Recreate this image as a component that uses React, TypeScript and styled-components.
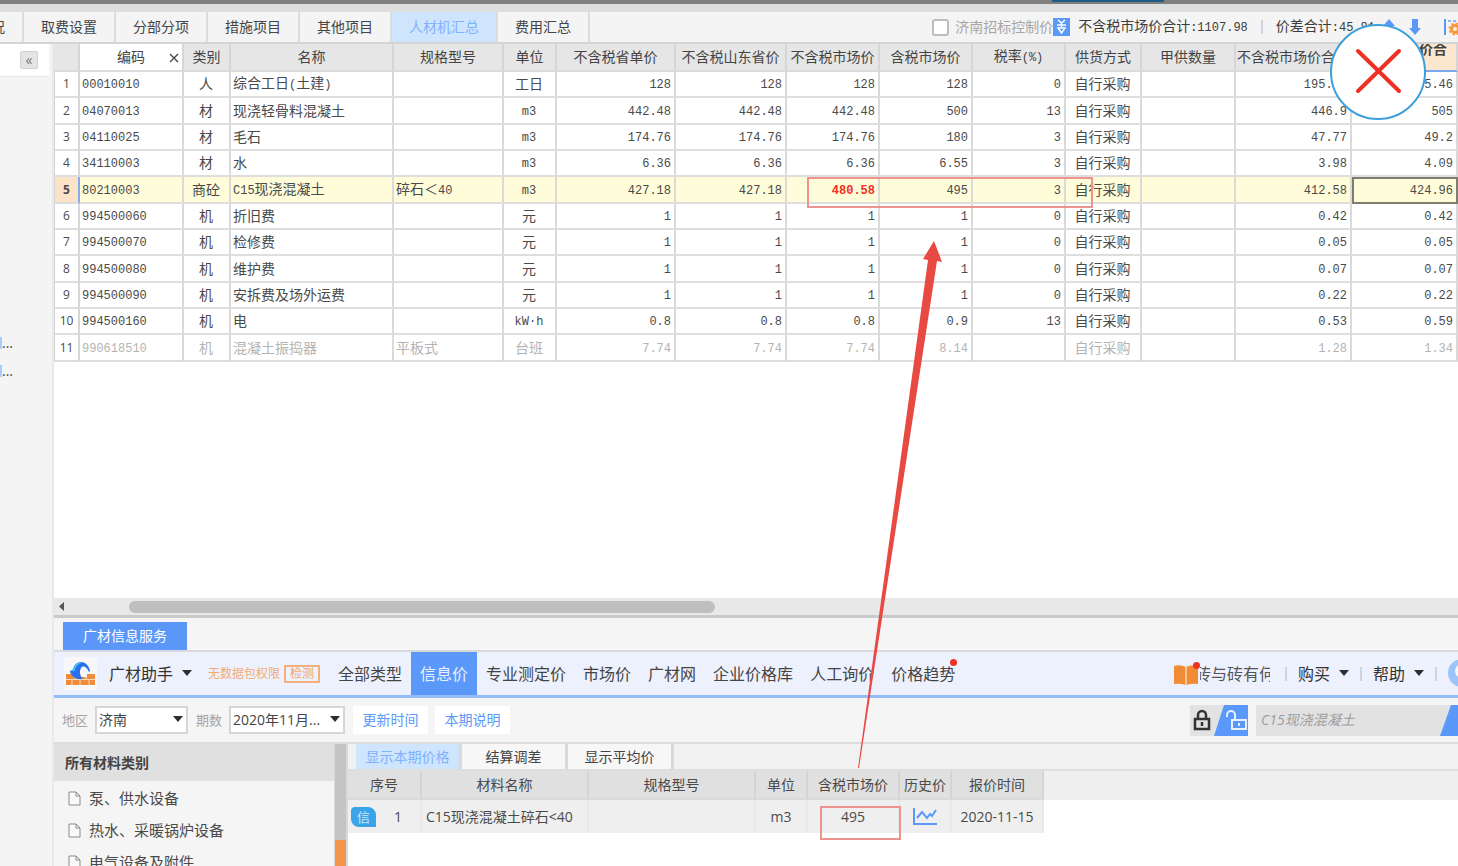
import React from 'react';
import styled, { createGlobalStyle, css } from 'styled-components';

const sans = '"Open Sans", "Noto Sans CJK SC", sans-serif';
const mono = '"Liberation Mono", "Noto Sans CJK SC", monospace';

const Global = createGlobalStyle`
  *, *::before, *::after { box-sizing: border-box; }
  body { margin: 0; background: #fff; color: #4a4a4a; font: 14px/20px ${sans}; overflow: hidden; }
  button, input, select { font: inherit; color: inherit; margin: 0; }
  button { border: 0; padding: 0; background: none; white-space: nowrap; cursor: pointer; }
`;

const Page = styled.div`
  position: relative;
  height: 100vh;
  min-width: 1200px;
  display: flex;
  flex-direction: column;
  overflow: hidden;
`;

const TitleStrip = styled.div`
  flex: none;
  height: 12px;
  background: #dedede;
  border-top: 4px solid #7f7f7f;
`;

const StripMark = styled.div`
  position: absolute;
  top: 0;
  left: 1052px;
  width: 112px;
  height: 2px;
  background: #1d5a85;
`;

const TopBar = styled.header`
  flex: none;
  display: flex;
  height: 32px;
  background: #f4f4f4;
  border-bottom: 2px solid #d4d4d4;
  overflow: hidden;
`;

const TopTab = styled.button<{ $active?: boolean; $wide?: boolean; $cut?: boolean }>`
  flex: none;
  width: ${p => (p.$wide ? 106 : p.$cut ? 24 : 92)}px;
  border-right: 2px solid #dcdcdc;
  background: ${p => (p.$active ? '#cfe5fe' : '#f4f4f4')};
  color: ${p => (p.$active ? '#7fb2fb' : '#444')};
  ${p => p.$cut && css`display: flex; justify-content: flex-end; align-items: center; padding-right: 17px; overflow: hidden;`}
`;

const Summary = styled.div`
  flex: 1;
  display: flex;
  align-items: center;
  justify-content: flex-end;
  white-space: nowrap;
  color: #3c3c3c;
`;

const CheckLabel = styled.label`
  display: flex;
  align-items: center;
  gap: 6px;
  color: #a6a6a6;
`;

const Checkbox = styled.input`
  appearance: none;
  width: 17px;
  height: 17px;
  border: 2px solid #bdbdbd;
  border-radius: 3px;
  background: #fff;
`;

const Total = styled.span`
  margin-left: 8px;
`;

const Num = styled.span`
  font: 12px/20px ${mono};
`;

const Sep = styled.i<{ $gap: number }>`
  width: 2px;
  height: 14px;
  margin: 0 ${p => p.$gap}px;
  background: #cdd3df;
`;

const Icon = styled.svg`
  flex: none;
  display: block;
`;

const ArrowButton = styled.button<{ $tight?: boolean }>`
  margin-left: ${p => (p.$tight ? 7 : 12)}px;
`;

const Body = styled.div`
  flex: 1;
  display: flex;
  min-height: 0;
`;

const Side = styled.aside`
  flex: none;
  width: 54px;
  background: #f4f4f4;
  border-right: 2px solid #e9e9e9;
`;

const SideHead = styled.div`
  height: 33px;
  margin-right: 3px;
  display: flex;
  align-items: center;
  justify-content: flex-end;
  padding-right: 11px;
  background: #fff;
  border-bottom: 1px solid #e6e6e6;
`;

const Collapse = styled.button`
  width: 18px;
  height: 18px;
  border: 1px solid #d0d0d0;
  border-radius: 2px;
  background: #e4e4e4;
  color: #777;
  font-size: 14px;
  line-height: 14px;
`;

const SideList = styled.div`
  display: flex;
  flex-direction: column;
  gap: 16px;
  padding-top: 260px;
`;

const SideItem = styled.div`
  height: 12px;
  border-left: 2px solid #a9cdf7;
  line-height: 12px;
`;

const Main = styled.main`
  flex: 1;
  min-width: 0;
  display: flex;
  flex-direction: column;
`;

const GridArea = styled.section`
  flex: none;
  height: 554px;
  overflow: hidden;
`;

const Grid = styled.table`
  width: 100%;
  table-layout: fixed;
  border-collapse: separate;
  border-spacing: 0;
  white-space: nowrap;
`;

const GridHead = styled.th<{ $kind?: 'white' | 'warm' }>`
  position: relative;
  height: 28px;
  padding: 0;
  overflow: hidden;
  font-weight: 400;
  color: #444;
  background: ${p => (p.$kind === 'white' ? '#fff' : p.$kind === 'warm' ? '#fce6cd' : '#e6e6e6')};
  border-right: 2px solid #d6d6d6;
  border-bottom: 2px solid ${p => (p.$kind === 'warm' ? '#7ba9ee' : '#dcdcdc')};
  ${p => p.$kind === 'warm' && css`
    vertical-align: top;
    text-align: right;
    padding-right: 9px;
    font-weight: 700;
    line-height: 10px;
  `}
`;

const ClearMark = styled.button`
  position: absolute;
  right: 2px;
  top: 8px;
`;

const Row = styled.tr<{ $state?: 'selected' | 'muted' }>`
  height: 26px;
  color: #4a4a4a;
  &:nth-child(3n + 2) { height: 27px; }
  ${p => p.$state === 'selected' && css`background: #fefcd9;`}
  ${p => p.$state === 'muted' && css`color: #b4b4b4;`}
`;

const Cell = styled.td<{ $align?: 'left' | 'right' | 'center'; $num?: boolean; $alert?: boolean; $focus?: boolean }>`
  padding: 0 3px 0 2px;
  line-height: 20px;
  text-align: ${p => p.$align || 'left'};
  border-right: 2px solid #dadada;
  border-bottom: 2px solid #dedede;
  ${p => p.$num && css`padding-top: 2px; font: 12px/20px ${mono};`}
  ${p => p.$alert && css`color: #f0301f; font-weight: 700;`}
  ${p => p.$focus && css`outline: 2px solid #7d7d70; outline-offset: -2px;`}
`;

const IndexCell = styled.th<{ $on?: boolean }>`
  padding: 0;
  font: ${p => (p.$on ? 700 : 400)} 12px/20px ${sans};
  color: #4a4a4a;
  background: ${p => (p.$on ? '#fce2c6' : '#fff')};
  border-left: 1px solid #d6d6d6;
  border-right: 2px solid ${p => (p.$on ? '#82aeee' : '#d6d6d6')};
  border-bottom: 2px solid #dedede;
`;

const ScrollBar = styled.div`
  flex: none;
  display: flex;
  align-items: center;
  height: 20px;
  padding-left: 5px;
  background: #e8e8e8;
  border-bottom: 3px solid #cacaca;
`;

const Thumb = styled.div`
  width: 586px;
  height: 12px;
  margin-left: 64px;
  border-radius: 6px;
  background: #bfbfbf;
`;

const Service = styled.section`
  flex: 1;
  min-height: 0;
  display: flex;
  flex-direction: column;
  background: #f5f5f5;
`;

const ServiceTabs = styled.div`
  flex: none;
  height: 34px;
  padding: 4px 0 0 9px;
  border-bottom: 2px solid #d9dae0;
`;

const ServiceTab = styled.button`
  width: 124px;
  height: 28px;
  background: #5b97f9;
  color: #fff;
`;

const Nav = styled.nav`
  flex: none;
  display: flex;
  align-items: center;
  height: 46px;
  padding-left: 10px;
  background: #edf1fe;
  border-bottom: 3px solid #92bdf8;
  font-size: 16px;
  white-space: nowrap;
`;

const Logo = styled.span`
  width: 33px;
  height: 33px;
  display: grid;
  place-items: center;
  border-radius: 4px;
  background: #f8f8fa;
`;

const MenuButton = styled.button`
  display: flex;
  align-items: center;
  gap: 9px;
  color: #333;
`;

const Brand = styled(MenuButton)`
  margin: 0 16px 0 12px;
`;

const Notice = styled.span`
  font-size: 12px;
  color: #f2ac74;
`;

const Detect = styled.button`
  width: 36px;
  height: 18px;
  margin: 0 10px 0 4px;
  border: 2px solid #f3b07a;
  color: #f2a468;
  font-size: 12px;
  line-height: 14px;
`;

const NavItem = styled.button<{ $active?: boolean }>`
  position: relative;
  height: 43px;
  padding: 0 8px;
  color: ${p => (p.$active ? '#e8f1ff' : '#444')};
  ${p => p.$active && css`background: #5a98fa; padding: 0 9px;`}
`;

const NavList = styled.div`
  display: flex;
  gap: 1px;
`;

const Dot = styled.i<{ $top: number; $right: number }>`
  position: absolute;
  top: ${p => p.$top}px;
  right: ${p => p.$right}px;
  width: 7px;
  height: 7px;
  border-radius: 50%;
  background: #ee3322;
`;

const NavRight = styled.div`
  flex: 1;
  display: flex;
  align-items: center;
  justify-content: flex-end;
`;

const Book = styled.span`
  position: relative;
  width: 26px;
  height: 24px;
`;

const Ticker = styled.a`
  display: flex;
  justify-content: center;
  width: 70px;
  margin-right: 4px;
  overflow: hidden;
  color: #555;
  text-decoration: none;
`;

const Filters = styled.div`
  flex: none;
  display: flex;
  align-items: center;
  height: 46px;
  padding-left: 8px;
  border-bottom: 2px solid #dcdcdc;
  white-space: nowrap;
`;

const FilterLabel = styled.label`
  font-size: 13px;
  color: #a3a3a3;
`;

const SelectBox = styled.span<{ $w: number }>`
  position: relative;
  width: ${p => p.$w}px;
  height: 28px;
  margin: 0 8px 0 7px;
  & > svg { position: absolute; right: 5px; top: 10px; pointer-events: none; }
`;

const Select = styled.select`
  appearance: none;
  width: 100%;
  height: 100%;
  padding: 0 2px;
  border: 2px solid #d6d6d6;
  border-radius: 0;
  background: #fff;
  color: #444;
`;

const LinkButton = styled.button`
  height: 28px;
  width: 75px;
  margin: 0 7px 0 0;
  background: #fff;
  color: #5a98fa;
`;

const LockGroup = styled.div`
  display: flex;
  width: 58px;
  height: 31px;
  margin: 0 8px 0 auto;
  background: #e2e2e2;
`;

const SearchBox = styled.div`
  display: flex;
  width: 202px;
  height: 31px;
  background: #e2e2e2;
`;

const SearchInput = styled.input`
  flex: 1;
  min-width: 0;
  border: 0;
  padding: 0 5px;
  background: transparent;
  font-style: italic;
  &::placeholder { color: #9d9d9d; opacity: 1; }
`;

const Lower = styled.div`
  flex: 1;
  min-height: 0;
  display: flex;
`;

const Categories = styled.div`
  flex: none;
  width: 280px;
  overflow: hidden;
`;

const CategoryHead = styled.h2`
  margin: 0;
  height: 37px;
  padding-left: 11px;
  font-size: 14px;
  line-height: 37px;
  background: #e0e0e0;
  color: #444;
`;

const CategoryList = styled.ul`
  list-style: none;
  margin: 0 10px 0 0;
  padding: 1px 0 0 14px;
`;

const Category = styled.li`
  display: flex;
  align-items: center;
  gap: 8px;
  height: 32px;
  font-size: 15px;
  color: #4a4a4a;
`;

const Splitter = styled.div`
  flex: none;
  width: 14px;
  border: solid #d9d9d9;
  border-width: 0 2px 0 1px;
  background: linear-gradient(#c5c4c2 96px, #f0954a 96px);
`;

const Prices = styled.div`
  flex: 1;
  min-width: 0;
  background: #fff;
`;

const PriceTabs = styled.div`
  display: flex;
  height: 27px;
  padding-left: 8px;
  background: #f1f1f1;
  border-bottom: 2px solid #dedede;
`;

const PriceTab = styled.button<{ $active?: boolean }>`
  width: 106px;
  border-right: 3px solid #d9d9d9;
  background: ${p => (p.$active ? '#cfe5fe' : '#f7f7f7')};
  color: ${p => (p.$active ? '#7fb2fb' : '#444')};
`;

const PriceHeadBand = styled.div`
  background: linear-gradient(#efefef 29px, #fff 29px);
`;

const PriceTable = styled.table`
  width: 696px;
  table-layout: fixed;
  border-collapse: separate;
  border-spacing: 0;
  white-space: nowrap;
  text-align: center;
  th { height: 29px; padding: 0; font-weight: 400; background: #e0e0e0; border-right: 2px solid #d4d4d4; border-bottom: 2px solid #dadada; }
  td { height: 33px; padding: 0; background: #efefef; border-right: 2px solid #e9e9e9; }
  td:nth-child(2) { text-align: left; padding-left: 4px; }
  td svg { margin: 0 auto; }
`;

const SeqCell = styled.div`
  display: flex;
  align-items: center;
  gap: 18px;
  padding-left: 3px;
`;

const Badge = styled.span`
  width: 25px;
  height: 20px;
  border-radius: 4px 8px 0 8px;
  background: #3ba3e8;
  color: #c4e8ff;
  font-size: 13px;
  line-height: 20px;
`;

const Overlay = styled.svg`
  position: absolute;
  inset: 0;
  pointer-events: none;
`;

const CloseButton = styled.button`
  position: absolute;
  top: 24px;
  left: 1330px;
  width: 96px;
  height: 96px;
`;

const Caret = () => (
  <Icon width="10" height="7" viewBox="0 0 10 7"><path d="M0 0H10L5 6Z" fill="#2e2e2e" /></Icon>
);

const columns: [string, number | undefined][] = [
  ['', 26], ['编码', 104], ['类别', 47], ['名称', 163], ['规格型号', 110], ['单位', 53],
  ['不含税省单价', 119], ['不含税山东省价', 111], ['不含税市场价', 93], ['含税市场价', 93],
  ['税率(%)', 93], ['供货方式', 76], ['甲供数量', 94], ['不含税市场价合计', 116], ['含税市场价合', undefined],
];

const rows: string[][] = [
  ['00010010', '人', '综合工日(土建)', '', '工日', '128', '128', '128', '128', '0', '195.46', '195.46'],
  ['04070013', '材', '现浇轻骨料混凝土', '', 'm3', '442.48', '442.48', '442.48', '500', '13', '446.9', '505'],
  ['04110025', '材', '毛石', '', 'm3', '174.76', '174.76', '174.76', '180', '3', '47.77', '49.2'],
  ['34110003', '材', '水', '', 'm3', '6.36', '6.36', '6.36', '6.55', '3', '3.98', '4.09'],
  ['80210003', '商砼', 'C15现浇混凝土', '碎石＜40', 'm3', '427.18', '427.18', '480.58', '495', '3', '412.58', '424.96'],
  ['994500060', '机', '折旧费', '', '元', '1', '1', '1', '1', '0', '0.42', '0.42'],
  ['994500070', '机', '检修费', '', '元', '1', '1', '1', '1', '0', '0.05', '0.05'],
  ['994500080', '机', '维护费', '', '元', '1', '1', '1', '1', '0', '0.07', '0.07'],
  ['994500090', '机', '安拆费及场外运费', '', '元', '1', '1', '1', '1', '0', '0.22', '0.22'],
  ['994500160', '机', '电', '', 'kW·h', '0.8', '0.8', '0.8', '0.9', '13', '0.53', '0.59'],
  ['990618510', '机', '混凝土振捣器', '平板式', '台班', '7.74', '7.74', '7.74', '8.14', '', '1.28', '1.34'],
];

// Latin runs are set in the narrow monospaced face next to full-width characters.
const Mixed = ({ text }: { text: string }) => (
  <>{text.split(/([\x20-\x7e·]+)/).filter(Boolean).map((t, i) => (/^[\x20-\x7e·]/.test(t) ? <Num key={i}>{t}</Num> : t))}</>
);

const MaterialRow = ({ data, index }: { data: string[]; index: number }) => {
  const [code, kind, name, spec, unit, ...n] = data;
  const selected = index === 4;
  return (
    <Row $state={selected ? 'selected' : index === 10 ? 'muted' : undefined}>
      <IndexCell scope="row" $on={selected}>{index + 1}</IndexCell>
      <Cell $num>{code}</Cell>
      <Cell $align="center">{kind}</Cell>
      <Cell><Mixed text={name} /></Cell>
      <Cell><Mixed text={spec} /></Cell>
      <Cell $align="center"><Mixed text={unit} /></Cell>
      {n.slice(0, 5).map((v, i) => <Cell key={i} $num $align="right" $alert={selected && i === 2}>{v}</Cell>)}
      <Cell $align="center">自行采购</Cell>
      <Cell />
      <Cell $num $align="right">{n[5]}</Cell>
      <Cell $num $align="right" $focus={selected}>{n[6]}</Cell>
    </Row>
  );
};

export default function App() {
  return (
    <Page>
      <Global />
      <TitleStrip />
      <StripMark />
      <TopBar>
        <TopTab $cut>况</TopTab>
        {['取费设置', '分部分项', '措施项目', '其他项目'].map(t => <TopTab key={t}>{t}</TopTab>)}
        <TopTab $active $wide>人材机汇总</TopTab>
        <TopTab>费用汇总</TopTab>
        <Summary>
          <CheckLabel><Checkbox type="checkbox" />济南招标控制价</CheckLabel>
          <Icon width="17" height="18" viewBox="0 0 17 18">
            <rect width="17" height="18" fill="#5a98fa" />
            <path d="M5 2l3.500 3L12 2M4 7h9M8.500 5v4M5 10l3.500 5 3.500-5z" stroke="#fff" strokeWidth="1.500" fill="none" />
          </Icon>
          <Total>不含税市场价合计<Num>:1107.98</Num></Total>
          <Sep $gap={13} />
          <span>价差合计<Num>:45.81</Num></span>
          <ArrowButton $tight aria-label="上移"><Icon width="14" height="18" viewBox="0 0 14 18"><path d="M7 1L13 8H10V17H4V8H1Z" fill="#5a98fa" /></Icon></ArrowButton>
          <ArrowButton aria-label="下移"><Icon width="14" height="18" viewBox="0 0 14 18"><path d="M7 17L13 10H10V1H4V10H1Z" fill="#5a98fa" /></Icon></ArrowButton>
          <ArrowButton aria-label="设置">
            <Icon width="24" height="18" viewBox="0 0 24 18">
              <path d="M11 1V17" stroke="#5a98fa" strokeWidth="2" />
              <path d="M14 3h3M19 3h3" stroke="#8ab5fb" strokeWidth="2" />
              <circle cx="21" cy="11" r="3.500" fill="none" stroke="#f39a3d" strokeWidth="3" />
              <circle cx="21" cy="11" r="5.500" fill="none" stroke="#f39a3d" strokeWidth="2" strokeDasharray="2.300 2" />
            </Icon>
          </ArrowButton>
        </Summary>
      </TopBar>
      <Body>
        <Side>
          <SideHead><Collapse aria-label="收起">«</Collapse></SideHead>
          <SideList><SideItem>...</SideItem><SideItem>...</SideItem></SideList>
        </Side>
        <Main>
          <GridArea>
            <Grid>
              <colgroup>{columns.map(([, w], i) => <col key={i} width={w} />)}</colgroup>
              <thead>
                <tr>
                  {columns.map(([t], i) => (
                    <GridHead key={i} scope="col" $kind={i === 1 ? 'white' : i === 14 ? 'warm' : undefined}>
                      <Mixed text={t} />
                      {i === 1 && (
                        <ClearMark aria-label="清除">
                          <Icon width="12" height="12" viewBox="0 0 12 12"><path d="M2 2l8 8M10 2l-8 8" stroke="#444" strokeWidth="1.300" /></Icon>
                        </ClearMark>
                      )}
                    </GridHead>
                  ))}
                </tr>
              </thead>
              <tbody>{rows.map((r, i) => <MaterialRow key={r[0]} data={r} index={i} />)}</tbody>
            </Grid>
          </GridArea>
          <ScrollBar>
            <Icon width="6" height="9" viewBox="0 0 6 9"><path d="M5 0V9L0 4.500Z" fill="#555" /></Icon>
            <Thumb />
          </ScrollBar>
          <Service>
            <ServiceTabs><ServiceTab>广材信息服务</ServiceTab></ServiceTabs>
            <Nav>
              <Logo>
                <Icon width="29" height="25" viewBox="0 0 29 25">
                  <path d="M0 13h7v3h14v-3h8v11H0z" fill="#f08c3c" />
                  <path d="M0 18.500h29M9 16v2.500M20 16v2.500M6 19v5M14 19v5M23 19v5" stroke="#fbd9b8" />
                  <path d="M17 18C9 19 5 15 4 10c3 0 3-3 5-6 4-5 13-4 15 6l-1 1c-2-5-6-7-8-4-2 4-1 8 2 11z" fill="#2a6ff0" />
                  <path d="M4 10c3 0 3-3 5-6 2-2 5-3 8-3-5 2-8 5-8 9z" fill="#3fc0f0" />
                </Icon>
              </Logo>
              <Brand>广材助手<Caret /></Brand>
              <Notice>无数据包权限</Notice>
              <Detect>检测</Detect>
              <NavList>
                {['全部类型', '信息价', '专业测定价', '市场价', '广材网', '企业价格库', '人工询价', '价格趋势'].map(t => (
                  <NavItem key={t} $active={t === '信息价'}>{t}{t === '价格趋势' && <Dot $top={7} $right={6} />}</NavItem>
                ))}
              </NavList>
              <NavRight>
                <Book>
                  <Icon width="26" height="24" viewBox="0 0 26 24">
                    <path d="M0 4q6-2 12 1q6-3 12-1v18q-6-1-12 1q-6-2-12-1z" fill="#f08c34" />
                    <path d="M12 5v18" stroke="#fbc48e" strokeWidth="2" />
                  </Icon>
                  <Dot $top={0} $right={0} />
                </Book>
                <Ticker href="#">砖与砖有何</Ticker>
                <Sep $gap={11} />
                <MenuButton>购买<Caret /></MenuButton>
                <Sep $gap={11} />
                <MenuButton>帮助<Caret /></MenuButton>
                <Sep $gap={11} />
                <Icon width="10" height="28" viewBox="0 0 10 28">
                  <circle cx="14" cy="13" r="14" fill="#9cc4f8" />
                  <circle cx="14" cy="11" r="7" fill="#f2f7ff" />
                </Icon>
              </NavRight>
            </Nav>
            <Filters>
              <FilterLabel htmlFor="region">地区</FilterLabel>
              <SelectBox $w={93}><Select id="region"><option>济南</option></Select><Caret /></SelectBox>
              <FilterLabel htmlFor="period">期数</FilterLabel>
              <SelectBox $w={116}><Select id="period"><option>2020年11月...</option></Select><Caret /></SelectBox>
              <LinkButton>更新时间</LinkButton>
              <LinkButton>本期说明</LinkButton>
              <LockGroup>
                <Icon width="58" height="31" viewBox="0 0 58 31">
                  <path d="M34 0H58V31H24Z" fill="#5a98fa" />
                  <rect x="5" y="14" width="14" height="10" fill="none" stroke="#333" strokeWidth="2.500" />
                  <path d="M8 14V10a4 4 0 0 1 8 0v4M12 17v4" fill="none" stroke="#333" strokeWidth="2.500" />
                  <rect x="42" y="15" width="14" height="9" fill="none" stroke="#e6f0ff" strokeWidth="2" />
                  <path d="M37 12V10a4 4 0 0 1 8 0v5M49 18v3" fill="none" stroke="#e6f0ff" strokeWidth="2" />
                </Icon>
              </LockGroup>
              <SearchBox>
                <SearchInput aria-label="搜索" placeholder="C15现浇混凝土" />
                <button aria-label="查询"><Icon width="18" height="31" viewBox="0 0 18 31"><path d="M11 0H18V31H0Z" fill="#5a98fa" /></Icon></button>
              </SearchBox>
            </Filters>
            <Lower>
              <Categories>
                <CategoryHead>所有材料类别</CategoryHead>
                <CategoryList>
                  {['泵、供水设备', '热水、采暖锅炉设备', '电气设备及附件'].map(t => (
                    <Category key={t}>
                      <Icon width="13" height="15" viewBox="0 0 13 15"><path d="M1 1H8L12 5V14H1ZM8 1V5H12" fill="#fafafa" stroke="#8a8a8a" /></Icon>
                      {t}
                    </Category>
                  ))}
                </CategoryList>
              </Categories>
              <Splitter />
              <Prices>
                <PriceTabs>
                  <PriceTab $active>显示本期价格</PriceTab>
                  <PriceTab>结算调差</PriceTab>
                  <PriceTab>显示平均价</PriceTab>
                </PriceTabs>
                <PriceHeadBand>
                  <PriceTable>
                    <colgroup>{[74, 167, 167, 52, 92, 52, 92].map((w, i) => <col key={i} width={w} />)}</colgroup>
                    <thead>
                      <tr>{['序号', '材料名称', '规格型号', '单位', '含税市场价', '历史价', '报价时间'].map(t => <th key={t} scope="col">{t}</th>)}</tr>
                    </thead>
                    <tbody>
                      <tr>
                        <td><SeqCell><Badge>信</Badge>1</SeqCell></td>
                        <td>C15现浇混凝土碎石&lt;40</td>
                        <td />
                        <td>m3</td>
                        <td>495</td>
                        <td>
                          <Icon width="24" height="18" viewBox="0 0 24 18">
                            <path d="M1 0V16H24" fill="none" stroke="#5a98fa" strokeWidth="2" />
                            <path d="M4 10l5-6 5 6 3-4 2 2 4-6" fill="none" stroke="#5a98fa" strokeWidth="2" />
                          </Icon>
                        </td>
                        <td>2020-11-15</td>
                      </tr>
                    </tbody>
                  </PriceTable>
                </PriceHeadBand>
              </Prices>
            </Lower>
          </Service>
        </Main>
      </Body>
      <Overlay width="1458" height="866" viewBox="0 0 1458 866">
        <g fill="none" stroke="#ee9490" strokeWidth="2">
          <rect x="808" y="178" width="284" height="29" />
          <rect x="821" y="807" width="79" height="32" />
        </g>
        <path d="M934 241L942 262L937 261L859 768L858 768L928 260L923 259Z" fill="#e84a43" />
      </Overlay>
      <CloseButton aria-label="关闭">
        <Icon width="96" height="96" viewBox="0 0 96 96">
          <circle cx="48" cy="48" r="47" fill="#fff" stroke="#3d9fdc" strokeWidth="2" />
          <path d="M28 27L69 67M69 27L28 67" stroke="#ee3124" strokeWidth="4" strokeLinecap="round" />
        </Icon>
      </CloseButton>
    </Page>
  );
}
